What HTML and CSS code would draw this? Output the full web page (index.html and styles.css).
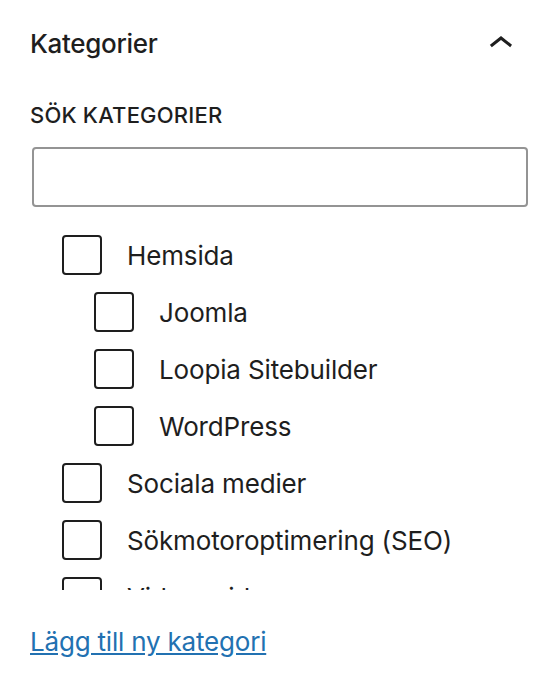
FILE: index.html
```html
<!DOCTYPE html>
<html lang="sv">
<head>
    <meta charset="UTF-8">
    <meta name="viewport" content="width=device-width, initial-scale=1.0">
    <title>Kategorier</title>
    <link rel="stylesheet" href="styles.css">
</head>
<body>
    <div class="panel">
        <div class="panel-header">
            <span class="panel-title">Kategorier</span>
            <button class="toggle" aria-label="Dölj">
                <svg width="48" height="48" viewBox="0 0 24 24" aria-hidden="true">
                    <path d="M6.5 12.4L12 8l5.5 4.4-.9 1.2L12 10l-4.6 3.6-1-1.2z"></path>
                </svg>
            </button>
        </div>

        <label class="search-label" for="cat-search">Sök kategorier</label>
        <input type="search" id="cat-search" class="search-input">

        <!-- category tree -->
        <ul class="category-list">
            <li>
                <label class="category"><input type="checkbox"> Hemsida</label>
                <ul class="children">
                    <li><label class="category"><input type="checkbox"> Joomla</label></li>
                    <li><label class="category"><input type="checkbox"> Loopia Sitebuilder</label></li>
                    <li><label class="category"><input type="checkbox"> WordPress</label></li>
                </ul>
            </li>
            <li><label class="category"><input type="checkbox"> Sociala medier</label></li>
            <li><label class="category"><input type="checkbox"> Sökmotoroptimering (SEO)</label></li>
            <li><label class="category"><input type="checkbox"> Videoguider</label></li>
        </ul>

        <a href="#" class="add-link">Lägg till ny kategori</a>
    </div>
</body>
</html>
```

FILE: styles.css
```css
/* Reset default margin and padding */
body {
    margin: 0;
    padding: 0;
    background-color: #fff;
    font-family: Inter, "Noto Sans", sans-serif;
    color: #1e1e1e;
}

.panel {
    padding: 28px 18px 0 30px;
}

/* Header with title and collapse button */
.panel-header {
    display: flex;
    align-items: center;
    justify-content: space-between;
}

.panel-title {
    font-size: 26px;
    line-height: 32px;
    font-weight: 500;
    letter-spacing: -0.3px;
}

.toggle {
    border: 0;
    background: none;
    padding: 0;
    margin-right: 3px;
    width: 48px;
    height: 48px;
    margin-top: -8px;
    margin-bottom: -8px;
}

.toggle svg {
    display: block;
    fill: #1e1e1e;
}

/* Search field */
.search-label {
    display: block;
    margin-top: 39px;
    font-size: 22px;
    line-height: 32px;
    font-weight: 500;
    letter-spacing: 0.2px;
    text-transform: uppercase;
}

.search-input {
    display: block;
    box-sizing: border-box;
    width: calc(100% - 2px);
    height: 60px;
    margin: 16px 0 0 2px;
    border: 2px solid #949494;
    border-radius: 4px;
    background: #fff;
}

/* Category tree */
.category-list {
    list-style: none;
    margin: 28px 0 0;
    padding: 0 0 0 32px;
    max-height: 355px;
    overflow: hidden;
}

.category-list ul {
    list-style: none;
    margin: 0;
    padding: 0 0 0 32px;
}

.category {
    display: flex;
    align-items: center;
    gap: 25px;
    height: 40px;
    margin-bottom: 17px;
    font-size: 26px;
    letter-spacing: -0.15px;
}

.category input {
    appearance: none;
    box-sizing: border-box;
    width: 40px;
    height: 40px;
    margin: 0;
    border: 2px solid #1e1e1e;
    border-radius: 4px;
    background: #fff;
    flex-shrink: 0;
}

.add-link {
    display: inline-block;
    margin-top: 36px;
    font-size: 26px;
    line-height: 32px;
    letter-spacing: -0.2px;
    color: #2271b1;
}
```
